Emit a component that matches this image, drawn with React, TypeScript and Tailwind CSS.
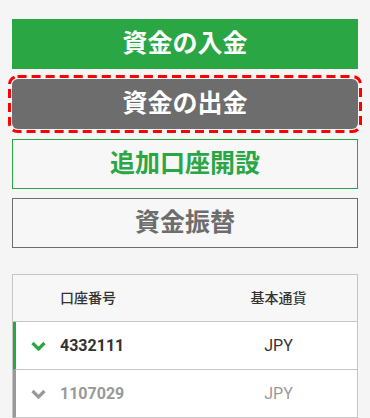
import React from 'react';

const font = { fontFamily: 'Roboto, "Noto Sans CJK JP", sans-serif' };

const accounts = [
  { id: '4332111', currency: 'JPY', active: true },
  { id: '1107029', currency: 'JPY', active: false },
];

const Chevron: React.FC<{ color: string }> = ({ color }) => (
  <svg width="15" height="10" viewBox="0 0 15 10" fill="none">
    <path d="M1.5 2 L7.5 8 L13.5 2" stroke={color} strokeWidth="3.2" strokeLinejoin="miter" />
  </svg>
);

// dashed focus ring drawn over the selected button
const FocusRing: React.FC = () => (
  <svg className="pointer-events-none absolute -inset-[4px] h-[calc(100%+8px)] w-[calc(100%+8px)]" preserveAspectRatio="none" viewBox="0 0 353 58">
    <rect x="1.5" y="1.5" width="350" height="55" rx="8" fill="none" stroke="#ff0000" strokeWidth="3" strokeDasharray="9 5" />
  </svg>
);

export default function App() {
  return (
    <div className="w-[370px] h-[418px] overflow-hidden bg-[#f5f5f5] px-3 pt-[19px]" style={font}>
      <div className="flex flex-col">
        <button className="h-[50px] w-full bg-[#2aa645] text-white text-[25px] font-bold">
          資金の入金
        </button>
        <div className="relative mt-[10px]">
          <button className="h-[50px] w-full rounded-[6px] bg-[#6d6d6d] text-white text-[25px] font-bold">
            資金の出金
          </button>
          <FocusRing />
        </div>
        <button className="mt-[10px] h-[50px] w-full border border-[#2aa645] bg-[#f7f7f7] text-[#2aa645] text-[25px] font-bold">
          追加口座開設
        </button>
        <button className="mt-[9px] h-[50px] w-full border border-[#6d6d6d] bg-[#f7f7f7] text-[#6d6d6d] text-[25px] font-bold">
          資金振替
        </button>
      </div>

      <div className="mt-[26px] border border-[#c4c4c4] bg-white">
        <div className="grid grid-cols-[47px_1fr_157px] h-[47px] items-center bg-[#f7f7f7] border-b border-[#c4c4c4] text-[14px] font-medium text-[#333]">
          <span />
          <span>口座番号</span>
          <span className="text-center">基本通貨</span>
        </div>
        {accounts.map((a) => (
          <div
            key={a.id}
            className={`grid grid-cols-[44px_1fr_157px] h-[48px] items-center border-b border-[#c4c4c4] border-l-[3px] ${
              a.active ? 'border-l-[#2aa645] text-[#333]' : 'border-l-[#999] text-[#999]'
            }`}
          >
            <span className="flex justify-center">
              <Chevron color={a.active ? '#2aa645' : '#999'} />
            </span>
            <span className="text-[16px] font-bold">{a.id}</span>
            <span className="text-center text-[16px]">{a.currency}</span>
          </div>
        ))}
      </div>
    </div>
  );
}
